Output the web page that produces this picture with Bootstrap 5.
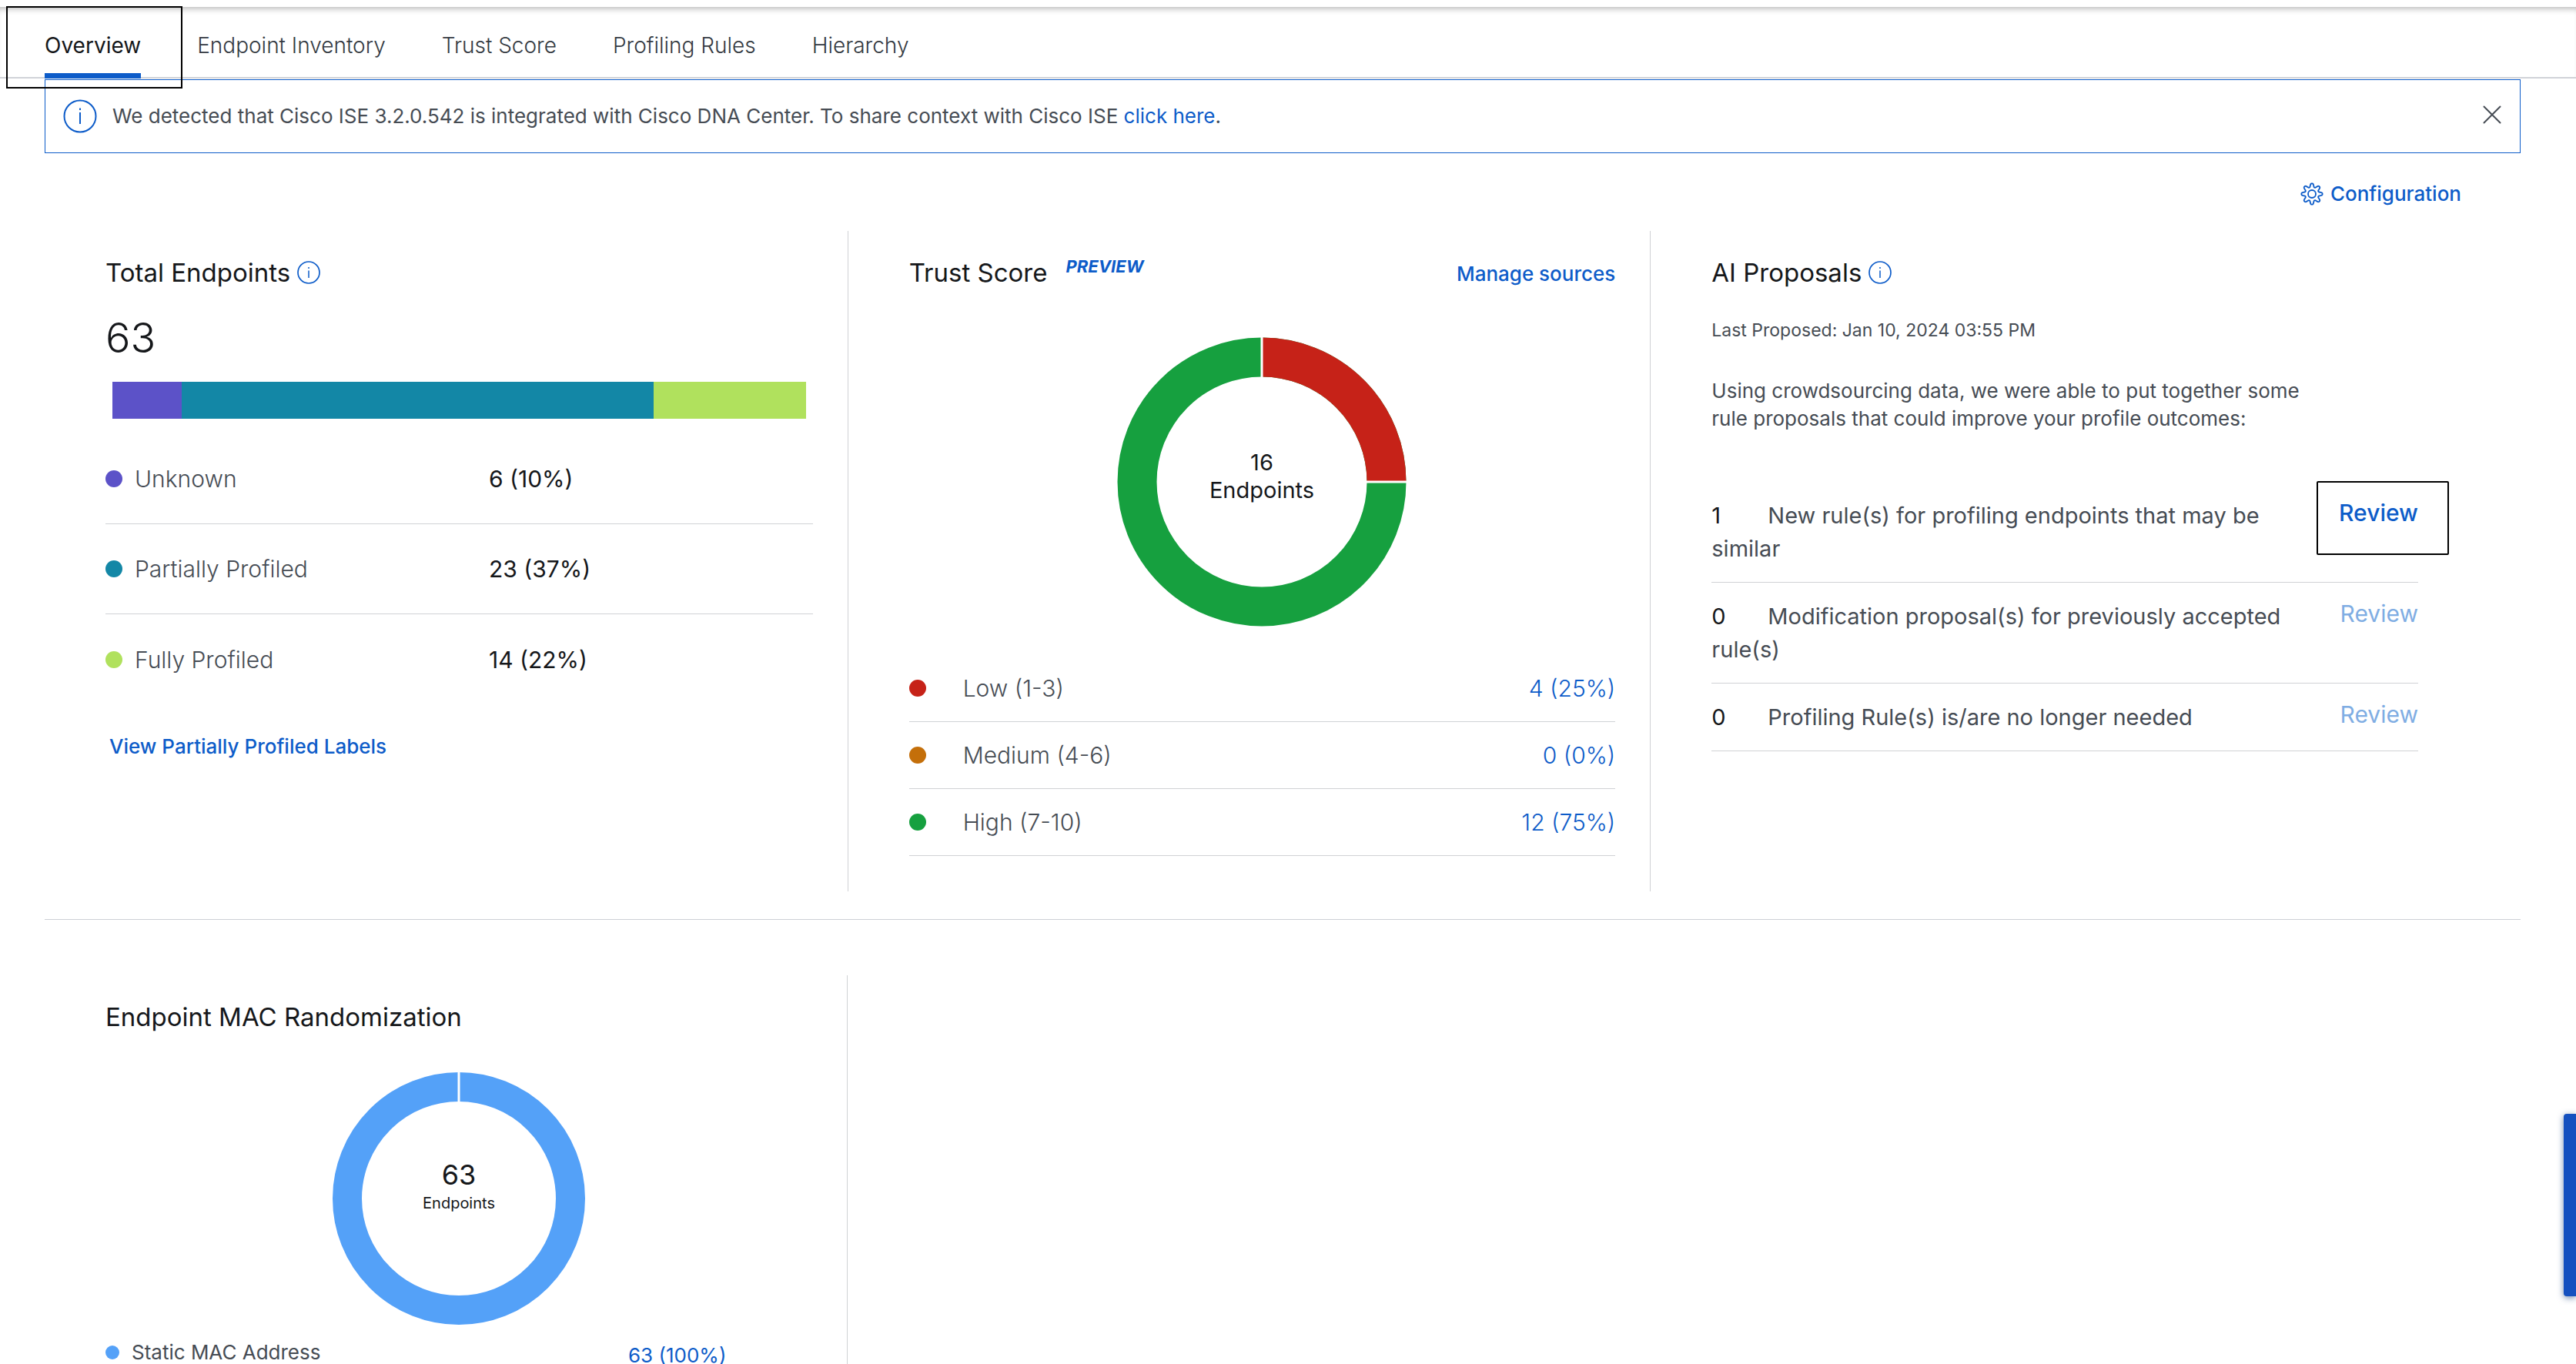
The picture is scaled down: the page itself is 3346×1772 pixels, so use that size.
<!DOCTYPE html>
<html lang="en">
<head>
<meta charset="utf-8">
<meta name="viewport" content="width=device-width, initial-scale=1">
<title>Endpoint Analytics - Overview</title>
<link href="https://cdn.jsdelivr.net/npm/bootstrap@5.3.0/dist/css/bootstrap.min.css" rel="stylesheet">
<style>
  body { font-family: Inter, "Liberation Sans", sans-serif; font-size: 30px; line-height: 36px; color: #464c54; background: #fff; }
  a { color: #0d5cc9; text-decoration: none; }
  .ink { color: #15171a; }
  .top-strip { height: 9px; }
  .tab-bar { border-bottom: 2px solid #d1d3d8; padding: 0 58px; box-shadow: inset 0 8px 8px -6px rgba(0,0,0,.3); }
  .tab-bar .nav { gap: 73px; }
  .tab-bar .nav-link { color: #343a42; font-size: 28px; font-weight: 300; padding: 32px 0 18px; border-bottom: 7px solid transparent; margin-bottom: -2px; }
  .tab-bar .nav-link.active { color: #15171a; border-bottom-color: #0d5cc9; font-weight: 400; }
  .tab-focus { position: absolute; left: -50px; right: -54px; top: -1px; bottom: -20px; border: 2px solid #000; z-index: 2; pointer-events: none; }
  .notice { margin: 1px 72px 0 58px; border: 1px solid #0d5cc9; height: 96px; padding: 0 24px 0 23px; font-size: 26px; }
  .notice .btn-plain { margin-bottom: 4px; }
  .btn-plain { border: 0; background: none; padding: 0; line-height: 0; }
  .tools { padding: 35px 149px 0 58px; height: 101px; }
  .fs-link { font-size: 26px; line-height: 36px; font-weight: 500; }
  .panels { margin: 0 160px 0 58px; }
  .panel { flex: 0 0 33.3333%; padding: 34px 45px 0 79px; min-height: 858px; }
  .panel + .panel { border-left: 1px solid #d0d2d5; }
  .panel.ruled-end { border-right: 1px solid #d0d2d5; }
  .panel h2 { font-size: 33px; line-height: 40px; font-weight: 400; margin: 0; color: #15171a; }
  .total { font-size: 54px; line-height: 60px; font-weight: 300; margin-top: 35px; }
  .stack { height: 48px; margin: 27px 9px 20px; }
  .dot { width: 22px; height: 22px; border-radius: 50%; flex: none; }
  .rule { border-bottom: 1px solid #d0d2d5; }
  .profile-row { height: 117px; }
  .profile-row .name { width: 460px; }
  .light-text { font-weight: 300; }
  .labels-link { margin: 35px 0 0 5px; }
  .preview { font-size: 22px; line-height: 24px; font-weight: 700; font-style: italic; color: #0d5cc9; margin-bottom: 16px; }
  .donut { display: block; margin: 0 auto; }
  .trust-donut { margin-top: 62px; margin-bottom: 35px; }
  .mac-donut { margin-top: 50px; }
  .score-row { height: 87px; }
  .small-note { font-size: 23px; line-height: 30px; margin: 40px 0 0; }
  .intro { font-size: 26px; line-height: 36px; margin: 46px 0 64px; max-width: 800px; }
  .proposal { padding: 22px 0; gap: 32px; font-size: 29px; line-height: 43px; }
  .proposal .count { display: inline-block; width: 73px; color: #15171a; }
  .review { flex: none; border: 0; background: none; padding: 0; color: #0d5cc9; font-size: 30px; font-weight: 500; line-height: 36px; }
  .review:disabled { color: #7fade3; font-weight: 400; }
  .review-focus { position: absolute; left: -29px; right: -40px; top: -23px; bottom: -37px; border: 2px solid #000; border-radius: 2px; pointer-events: none; }
  .split { margin: 36px 72px 72px 58px; border-top: 1px solid #cdd0d6; }
  .mac-row { margin-top: 12px; font-size: 26px; }
  .mac-row .name { width: 679px; }
  .mac-row .dot { width: 18px; height: 18px; }
  .mac-row a { margin-top: 8px; }
  .side-tab { position: fixed; right: 0; top: 1447px; width: 16px; height: 237px; border: 0; padding: 0; background: #1450bf; border-radius: 4px 0 0 4px; box-shadow: 0 2px 8px rgba(20,60,120,.6); }
</style>
<script src="https://cdn.jsdelivr.net/npm/bootstrap@5.3.0/dist/js/bootstrap.bundle.min.js"></script>
</head>
<body>
<div class="vh-100 overflow-hidden">
  <div class="top-strip"></div>
  <nav class="tab-bar">
    <div class="nav">
      <a class="nav-link active position-relative" href="#" aria-current="page">Overview<span class="tab-focus"></span></a>
      <a class="nav-link" href="#">Endpoint Inventory</a>
      <a class="nav-link" href="#">Trust Score</a>
      <a class="nav-link" href="#">Profiling Rules</a>
      <a class="nav-link" href="#">Hierarchy</a>
    </div>
  </nav>

  <div class="notice d-flex align-items-center" role="status">
    <svg class="flex-shrink-0" width="44" height="44" viewBox="0 0 44 44" fill="none" stroke="#0d5cc9" stroke-width="2"><circle cx="22" cy="22" r="20.5"/><path d="M22 17v15"/><path d="M22 11.500v2.500"/></svg>
    <span class="ms-3 ps-1">We detected that Cisco ISE 3.2.0.542 is integrated with Cisco DNA Center. To share context with Cisco ISE <a href="#">click here</a>.</span>
    <button type="button" class="btn-plain ms-auto" aria-label="Close"><svg width="24" height="24" viewBox="0 0 24 24" stroke="#464c54" stroke-width="2" stroke-linecap="round"><path d="M1.500 1.500l21 21M22.500 1.500l-21 21"/></svg></button>
  </div>

  <div class="tools d-flex justify-content-end align-items-start">
    <a href="#" class="fs-link d-flex align-items-center gap-2"><svg width="32" height="32" viewBox="0 0 32 32" fill="none" stroke="#0d5cc9" stroke-width="1.800" stroke-linejoin="round"><circle cx="16" cy="16" r="5"/><path id="gear" d=""/></svg>Configuration</a>
  </div>

  <main>
    <div class="panels d-flex">
      <section class="panel">
        <div class="d-flex align-items-center gap-2"><h2>Total Endpoints</h2>
          <svg width="32" height="32" viewBox="0 0 32 32" fill="none" stroke="#0d5cc9"><circle cx="16" cy="16" r="14" stroke-width="1.700"/><path d="M16 13.500v9.500M16 9v2" stroke-width="1.500"/></svg></div>
        <div class="total ink">63</div>
        <div class="stack d-flex">
          <div style="width:10%;background:#5c52c8"></div>
          <div style="width:68%;background:#1387a6"></div>
          <div style="width:22%;background:#b0e15d"></div>
        </div>
        <div class="profile-row rule d-flex align-items-center"><span class="dot" style="background:#5c52c8"></span><span class="name ms-3 light-text">Unknown</span><span class="ink">6 (10%)</span></div>
        <div class="profile-row rule d-flex align-items-center"><span class="dot" style="background:#1387a6"></span><span class="name ms-3 light-text">Partially Profiled</span><span class="ink">23 (37%)</span></div>
        <div class="profile-row d-flex align-items-center"><span class="dot" style="background:#b0e15d"></span><span class="name ms-3 light-text">Fully Profiled</span><span class="ink">14 (22%)</span></div>
        <div class="labels-link"><a href="#" class="fs-link">View Partially Profiled Labels</a></div>
      </section>

      <section class="panel">
        <div class="d-flex align-items-center"><h2>Trust Score</h2><span class="preview ms-4">PREVIEW</span><a href="#" class="fs-link ms-auto pt-1">Manage sources</a></div>
        <svg class="donut trust-donut" width="380" height="380" viewBox="0 0 380 380" role="img" aria-label="16 endpoints">
          <g fill="none" stroke-width="51"><circle cx="190" cy="190" r="162" stroke="#16a03f"/><path d="M190 28a162 162 0 0 1 162 162" stroke="#c62218"/></g>
          <path d="M190 0v56M324 190h56" stroke="#fff" stroke-width="3"/>
          <g fill="#15171a" font-size="29" text-anchor="middle"><text x="190" y="175">16</text><text x="190" y="211">Endpoints</text></g>
        </svg>
        <div>
          <div class="score-row rule d-flex align-items-center"><span class="dot" style="background:#c62218"></span><span class="ms-5 light-text">Low (1-3)</span><a href="#" class="ms-auto light-text">4 (25%)</a></div>
          <div class="score-row rule d-flex align-items-center"><span class="dot" style="background:#c46f0a"></span><span class="ms-5 light-text">Medium (4-6)</span><a href="#" class="ms-auto light-text">0 (0%)</a></div>
          <div class="score-row rule d-flex align-items-center"><span class="dot" style="background:#16a03f"></span><span class="ms-5 light-text">High (7-10)</span><a href="#" class="ms-auto light-text">12 (75%)</a></div>
        </div>
      </section>

      <section class="panel">
        <div class="d-flex align-items-center gap-2"><h2>AI Proposals</h2>
          <svg width="32" height="32" viewBox="0 0 32 32" fill="none" stroke="#0d5cc9"><circle cx="16" cy="16" r="14" stroke-width="1.700"/><path d="M16 13.500v9.500M16 9v2" stroke-width="1.500"/></svg></div>
        <p class="small-note">Last Proposed: Jan 10, 2024 03:55 PM</p>
        <p class="intro">Using crowdsourcing data, we were able to put together some rule proposals that could improve your profile outcomes:</p>
        <div class="proposal rule d-flex align-items-start"><div class="flex-fill"><span class="count">1</span>New rule(s) for profiling endpoints that may be similar</div><button type="button" class="review position-relative">Review<span class="review-focus"></span></button></div>
        <div class="proposal rule d-flex align-items-start"><div class="flex-fill"><span class="count">0</span>Modification proposal(s) for previously accepted rule(s)</div><button type="button" class="review" disabled>Review</button></div>
        <div class="proposal rule d-flex align-items-start"><div class="flex-fill"><span class="count">0</span>Profiling Rule(s) is/are no longer needed</div><button type="button" class="review" disabled>Review</button></div>
      </section>
    </div>

    <div class="split"></div>

    <div class="panels d-flex">
      <section class="panel ruled-end">
        <h2>Endpoint MAC Randomization</h2>
        <svg class="donut mac-donut" width="332" height="332" viewBox="0 0 332 332" role="img" aria-label="63 endpoints">
          <circle cx="166" cy="166" r="145" fill="none" stroke="#54a1f8" stroke-width="38"/>
          <path d="M166 0v42" stroke="#fff" stroke-width="3"/>
          <g fill="#15171a" text-anchor="middle"><text x="166" y="148" font-size="36">63</text><text x="166" y="179" font-size="20">Endpoints</text></g>
        </svg>
        <div class="mac-row d-flex"><span class="name d-flex align-items-center gap-3"><span class="dot" style="background:#54a1f8"></span><span>Static MAC Address</span></span><a href="#">63 (100%)</a></div>
      </section>
    </div>
  </main>
</div>
<button type="button" class="side-tab" aria-label="Feedback"></button>
<script>
  // Eight-toothed gear outline
  (function () {
    var d = '', n = 96;
    for (var i = 0; i < n; i++) {
      var t = i / n * Math.PI * 2, c = Math.cos(8 * t);
      var r = 11.300 + 2.600 * Math.tanh(1.500 * c);
      d += (i ? 'L' : 'M') + (16 + r * Math.sin(t)).toFixed(2) + ' ' + (16 - r * Math.cos(t)).toFixed(2);
    }
    document.getElementById('gear').setAttribute('d', d + 'Z');
  })();
</script>
</body>
</html>
